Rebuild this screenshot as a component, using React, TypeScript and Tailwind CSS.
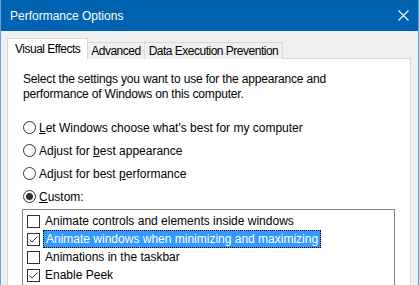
import React from 'react';

const font = { fontFamily: '"Liberation Sans", Arial, sans-serif' };

function Radio({ checked, children }: { checked?: boolean; children: React.ReactNode }) {
  return (
    <div className="flex items-center h-[23px]">
      <span className="w-[13px] h-[13px] rounded-full border border-[#333] bg-white flex items-center justify-center">
        {checked && <span className="w-[7px] h-[7px] rounded-full bg-[#333]" />}
      </span>
      <span className="ml-[3px]">{children}</span>
    </div>
  );
}

function CheckRow({ checked, selected, label }: { checked?: boolean; selected?: boolean; label: string }) {
  return (
    <div className="flex items-center h-[18px] pl-[4px]">
      <span className="w-[13px] h-[13px] border border-[#333] bg-white flex items-center justify-center">
        {checked && (
          <svg width="11" height="11" viewBox="0 0 11 11">
            <path d="M1.5 5.5 L4 8 L9.5 2.5" fill="none" stroke="#333" strokeWidth="1" />
          </svg>
        )}
      </span>
      <span
        className={
          selected
            ? 'ml-[3px] px-[2px] h-[18px] leading-[16px] bg-[#3399ff] text-white border border-dotted border-[#000]'
            : 'ml-[5px]'
        }
      >
        {label}
      </span>
    </div>
  );
}

export default function App() {
  return (
    <div
      className="w-[419px] h-[285px] overflow-hidden bg-[#f0f0f0] border-x border-[#6a9fd6] flex flex-col text-[12px] text-black"
      style={font}
    >
      {/* Title bar */}
      <div className="h-[31px] shrink-0 bg-[#0063b1] flex items-center justify-between pl-[9px] pr-[9px] text-white text-[12px]">
        <span>Performance Options</span>
        <svg width="11" height="11" viewBox="0 0 11 11">
          <path d="M0.5 0.5 L10.5 10.5 M10.5 0.5 L0.5 10.5" stroke="#fff" strokeWidth="1.1" />
        </svg>
      </div>

      <div className="flex-1 flex flex-col pl-[6px] pr-[7px] pt-[7px]">
        {/* Tabs */}
        <div className="flex items-end h-[21px] relative z-10 tracking-[-0.5px]">
          <div className="h-[21px] px-[7px] bg-white border border-b-0 border-[#d9d9d9] flex items-center">
            Visual Effects
          </div>
          <div className="h-[17px] px-[3px] bg-[#f0f0f0] border-t border-r border-[#d9d9d9] flex items-center">
            Advanced
          </div>
          <div className="h-[17px] px-[4px] bg-[#f0f0f0] border-t border-r border-[#d9d9d9] flex items-center">
            Data Execution Prevention
          </div>
        </div>

        {/* Panel */}
        <div className="flex-1 -mt-px bg-white border border-[#d9d9d9] pl-[15px] pr-[13px] pt-[13px]">
          <p className="leading-[15px] tracking-[-0.17px]">
            Select the settings you want to use for the appearance and
            <br />
            performance of Windows on this computer.
          </p>

          <div className="mt-[14px] flex flex-col">
            <Radio>
              <u>L</u>et Windows choose what's best for my computer
            </Radio>
            <Radio>
              Adjust for <u>b</u>est appearance
            </Radio>
            <Radio>
              Adjust for best <u>p</u>erformance
            </Radio>
            <Radio checked>
              <u>C</u>ustom:
            </Radio>
          </div>

          <div className="mt-[1px] w-[373px] border border-[#828790] pt-[2px] pb-[4px] -ml-[1px]">
            <CheckRow label="Animate controls and elements inside windows" />
            <CheckRow checked selected label="Animate windows when minimizing and maximizing" />
            <CheckRow label="Animations in the taskbar" />
            <CheckRow checked label="Enable Peek" />
          </div>
        </div>
      </div>
    </div>
  );
}
